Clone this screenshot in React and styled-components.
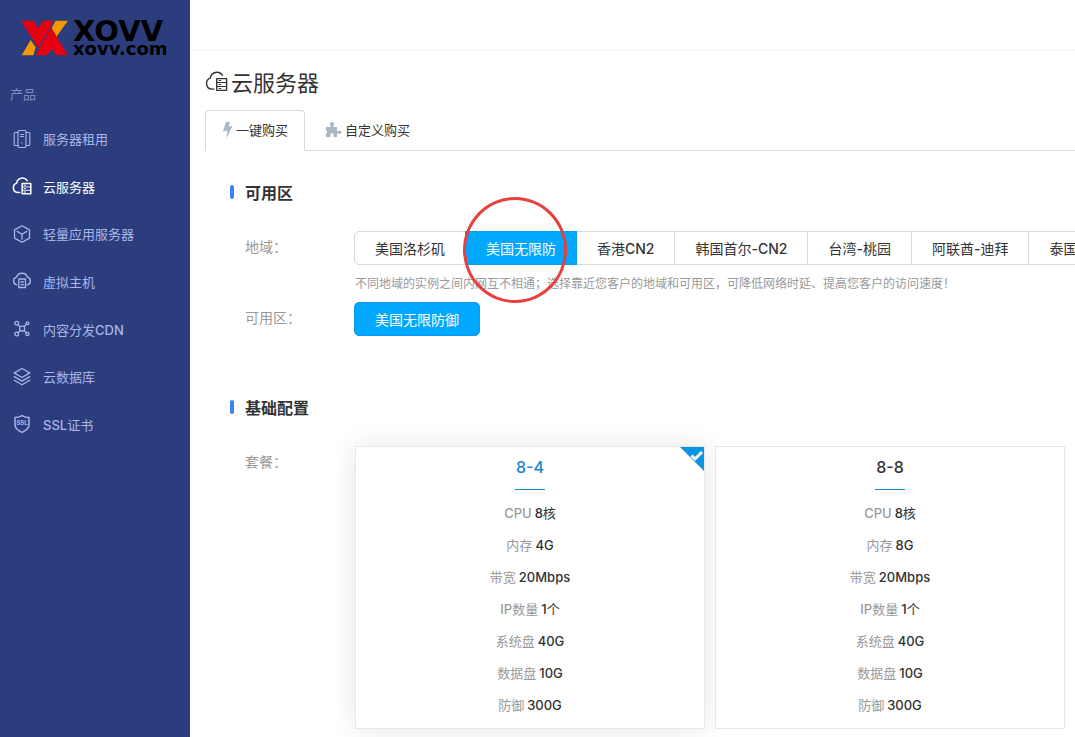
import React, { useState } from 'react';
import styled, { createGlobalStyle } from 'styled-components';

const GlobalStyle = createGlobalStyle`
  * {
    box-sizing: border-box;
  }

  body {
    margin: 0;
    background: #fff;
    color: #333;
    font-family: Inter, "Noto Sans CJK SC", sans-serif;
    font-size: 13px;
  }

  button {
    font-family: inherit;
    cursor: pointer;
  }
`;

const Page = styled.div`
  display: flex;
  height: 100vh;
  overflow: hidden;
`;

const Sidebar = styled.aside`
  flex: 0 0 190px;
  background: #2b3d7d;
`;

const Logo = styled.a`
  display: flex;
  align-items: center;
  gap: 5px;
  height: 76px;
  padding-left: 21px;
  color: #000;
  text-decoration: none;
  font-family: "DejaVu Sans", sans-serif;
  font-weight: bold;
`;

const LogoText = styled.span`
  display: flex;
  flex-direction: column;
`;

const LogoName = styled.span`
  font-size: 29px;
  line-height: 22px;
`;

const LogoDomain = styled.span`
  font-size: 18px;
  line-height: 14px;
`;

const MenuTitle = styled.div`
  margin-bottom: 3px;
  padding-left: 10px;
  line-height: 36px;
  color: #7d8cc4;
`;

const Menu = styled.nav`
  display: grid;
  grid-auto-rows: 1fr;
  min-height: 333px;
`;

const MenuLink = styled.a`
  display: flex;
  align-items: center;
  gap: 11px;
  padding-left: 12px;
  color: ${(props) => (props.$active ? '#fff' : '#a9b7e8')};
  text-decoration: none;

  &:hover {
    color: #fff;
  }
`;

const Main = styled.main`
  flex: 1;
  min-width: 0;
  overflow: hidden;
`;

const TopBar = styled.header`
  height: 50px;
  border-bottom: 1px solid #f3f3f3;
  box-shadow: 0 1px 2px rgba(0, 0, 0, 0.03);
`;

const PageTitle = styled.h1`
  display: flex;
  align-items: center;
  gap: 3px;
  height: 60px;
  margin: 0;
  padding: 2px 0 0 15px;
  font-size: 22px;
  font-weight: 400;
`;

const Tabs = styled.div`
  display: flex;
  gap: 3px;
  height: 41px;
  margin-left: 15px;
  border-bottom: 1px solid #d9d9d9;
`;

const Tab = styled.button`
  display: flex;
  align-items: center;
  gap: 3px;
  height: 41px;
  padding: 0 16px 2px;
  border: 1px solid ${(props) => (props.$active ? '#d9d9d9' : 'transparent')};
  border-bottom-color: ${(props) => (props.$active ? '#fff' : '#d9d9d9')};
  border-radius: 4px 4px 0 0;
  background: #fff;
  color: #333;
  font-size: 13px;

  svg {
    color: #a9b7c4;
  }
`;

const Section = styled.section`
  padding: 23px 10px 30px 40px;
`;

const SectionTitle = styled.h2`
  display: flex;
  align-items: center;
  gap: 11px;
  margin: 0;
  height: 36px;
  font-size: 16px;
  font-weight: 600;

  &::before {
    content: "";
    width: 4px;
    height: 14px;
    border-radius: 2px;
    background: #3b82f6;
  }
`;

const Field = styled.div`
  display: flex;
  padding-left: 15px;
  margin-top: ${(props) => props.$top}px;
`;

const Label = styled.div`
  flex: 0 0 109px;
  line-height: 32px;
  color: #999;
  font-size: 14px;
`;

const Control = styled.div`
  flex: 1;
  min-width: 0;
`;

const Options = styled.div`
  display: flex;
`;

const Option = styled.button`
  position: relative;
  flex: none;
  height: 34px;
  margin-left: -1px;
  padding: 0 20px;
  border: 1px solid ${(props) => (props.$active ? '#0c9bea' : '#d9d9d9')};
  background: ${(props) => (props.$active ? '#00a8ff' : '#fff')};
  color: ${(props) => (props.$active ? '#fff' : '#333')};
  z-index: ${(props) => (props.$active ? 1 : 0)};
  font-size: 14px;

  &:first-child {
    margin-left: 0;
    border-radius: 5px 0 0 5px;
  }

  &:last-child {
    border-radius: 0 5px 5px 0;
  }

  &:only-child {
    border-radius: 5px;
  }
`;

const Marker = styled.span`
  position: absolute;
  top: -35px;
  left: -3px;
  width: 104px;
  height: 106px;
  border: 3px solid #e8403c;
  border-radius: 50%;
  pointer-events: none;
`;

const Hint = styled.p`
  margin: 0;
  padding-left: 1px;
  line-height: 37px;
  color: #999;
  font-size: 12px;
  white-space: nowrap;
`;

const Plans = styled.div`
  display: grid;
  grid-template-columns: repeat(auto-fill, minmax(340px, 1fr));
  gap: 10px;
  padding-left: 1px;
`;

const Plan = styled.button`
  position: relative;
  display: flex;
  flex-direction: column;
  align-items: center;
  padding: 0 0 7px;
  border: 1px solid #e8e8e8;
  background: #fff;
  color: #333;
  font-size: 13px;
  box-shadow: ${(props) => (props.$active ? '0 0 25px rgba(0, 0, 0, 0.1)' : 'none')};
`;

const PlanName = styled.span`
  width: 30px;
  height: 43px;
  margin-bottom: 7px;
  border-bottom: 1px solid #1090c8;
  color: ${(props) => (props.$active ? '#1c87ca' : '#333')};
  font-size: 16px;
  font-weight: 500;
  line-height: 41px;
  white-space: nowrap;
`;

const Spec = styled.span`
  display: flex;
  gap: 3px;
  line-height: 32px;
  color: #999;
`;

const SpecValue = styled.span`
  color: #333;
`;

const Corner = styled.svg`
  position: absolute;
  top: 0;
  right: 0;
`;

const Latin = styled.span`
  font-weight: 500;
`;

// latin letters and digits are set heavier than the chinese text around them
const Mixed = ({ children }) => (
  <span>
    {children.split(/([\w-]+)/).map((part, i) => (i % 2 ? <Latin key={i}>{part}</Latin> : part))}
  </span>
);

const Icon = ({ size = 20, width = 1.3, children }) => (
  <svg
    width={size}
    height={size}
    viewBox="0 0 20 20"
    fill="none"
    stroke="currentColor"
    strokeWidth={width}
    strokeLinecap="round"
    strokeLinejoin="round"
    aria-hidden="true"
  >
    {children}
  </svg>
);

const CloudServer = (props) => (
  <Icon {...props}>
    <path d="M7.8 16.6H6A4.9 4.9 0 0 1 4.6 7.1 5.8 5.8 0 0 1 15.2 4.6" />
    <path d="M10.2 7.5h8.6v10.2h-8.6z" />
    <path strokeWidth="0.9" d="M10.2 10.9h8.6M10.2 14.3h8.6M12.3 9.2h1.4M12.3 12.6h1.4M12.3 16h1.4" />
  </Icon>
);

const icons = {
  server: (
    <Icon width={1.1}>
      <rect x="6" y="1.5" width="8" height="17" rx="1.2" />
      <path d="M6 3.5H3.2a1 1 0 0 0-1 1v11a1 1 0 0 0 1 1H6M14 3.5h2.8a1 1 0 0 1 1 1v11a1 1 0 0 1-1 1H14M8.5 5.5h3M8.5 7.5h3M10 13.5v.5" />
    </Icon>
  ),
  cloud: <CloudServer width={1.5} />,
  cube: (
    <Icon>
      <path d="M10 1.8l7.5 4.1v8.2L10 18.3l-7.5-4.2V5.9zM5.2 7.4L10 10.2l4.8-2.8M10 10.2v5" />
    </Icon>
  ),
  host: (
    <Icon>
      <path d="M4.8 13.8A3.9 3.9 0 0 1 4.5 6.2 5.8 5.8 0 0 1 15.5 6.2a3.9 3.9 0 0 1-.3 7.6" />
      <path d="M6.8 8h6.7v8.5H6.8zM9 11h2.4M9 13.7h2.4" />
    </Icon>
  ),
  cdn: (
    <Icon>
      <circle cx="4.7" cy="4.2" r="1.9" />
      <circle cx="15.5" cy="4.2" r="1.4" />
      <circle cx="4.7" cy="15" r="1.9" />
      <circle cx="15.5" cy="15" r="1.6" />
      <rect x="7.7" y="7.2" width="4.8" height="4.8" rx="1.2" />
      <path d="M6 5.6l2 2M14.4 5.2l-2.2 2.3M6 13.6l2-2M14.3 13.8l-2.1-2.2" />
    </Icon>
  ),
  database: (
    <Icon>
      <path d="M10 1.5l7.8 4.4L10 10.5 2.2 5.9zM2.2 9.6l7.8 4.5 7.8-4.5M2.2 13.3L10 17.8l7.8-4.5" />
    </Icon>
  ),
  ssl: (
    <Icon width={1.5}>
      <path d="M10 1.6c2.2 1.3 4.6 2 7 2v7.2c0 3.6-3.3 6-7 7.6-3.7-1.6-7-4-7-7.6V3.6c2.4 0 4.8-.7 7-2z" />
      <text x="10" y="11" textAnchor="middle" fontSize="6" fontWeight="700" fill="currentColor" stroke="none">SSL</text>
    </Icon>
  ),
};

const menu = [
  { icon: 'server', name: '服务器租用' },
  { icon: 'cloud', name: '云服务器' },
  { icon: 'cube', name: '轻量应用服务器' },
  { icon: 'host', name: '虚拟主机' },
  { icon: 'cdn', name: '内容分发CDN' },
  { icon: 'database', name: '云数据库' },
  { icon: 'ssl', name: 'SSL证书' },
];

const regions = ['美国洛杉矶', '美国无限防', '香港CN2', '韩国首尔-CN2', '台湾-桃园', '阿联酋-迪拜', '泰国-曼谷'];

const plans = [
  { name: '8-4', memory: '4G' },
  { name: '8-8', memory: '8G' },
];

const specs = (plan) => [
  ['CPU', '8核'],
  ['内存', plan.memory],
  ['带宽', '20Mbps'],
  ['IP数量', '1个'],
  ['系统盘', '40G'],
  ['数据盘', '10G'],
  ['防御', '300G'],
];

const App = () => {
  const [tab, setTab] = useState('quick');
  const [region, setRegion] = useState('美国无限防');
  const [plan, setPlan] = useState('8-4');

  return (
    <Page>
      <GlobalStyle />
      <Sidebar>
        <Logo href="#">
          <svg width="47" height="36" viewBox="0 0 141 108" aria-hidden="true">
            <path fill="#f39800" d="M104 2h37l-35 48-14-26zM2 106l27-46 15 22-7 24z" />
            <path fill="#e60012" d="M0 2h37l15 23L66 2h32L52 84z" />
            <path fill="#e60012" d="M90 22l50 84h-34L92 86l-14 20H44z" />
          </svg>
          <LogoText>
            <LogoName>XOVV</LogoName>
            <LogoDomain>xovv.com</LogoDomain>
          </LogoText>
        </Logo>
        <MenuTitle>产品</MenuTitle>
        <Menu>
          {menu.map((item) => (
            <MenuLink href="#" key={item.name} $active={item.icon === 'cloud'}>
              {icons[item.icon]}
              <Mixed>{item.name}</Mixed>
            </MenuLink>
          ))}
        </Menu>
      </Sidebar>
      <Main>
        <TopBar />
        <PageTitle>
          <CloudServer size={23} width={1.2} />
          云服务器
        </PageTitle>
        <Tabs>
          <Tab $active={tab === 'quick'} onClick={() => setTab('quick')}>
            <svg width="11" height="18" viewBox="0 0 11 18" fill="currentColor" aria-hidden="true">
              <path d="M4 1h4L6.5 5.5 10.5 5 4.5 17l1-7.5L1 10.5z" />
            </svg>
            一键购买
          </Tab>
          <Tab $active={tab === 'custom'} onClick={() => setTab('custom')}>
            <svg width="17" height="16" viewBox="0 0 17 16" fill="currentColor" aria-hidden="true">
              <path d="M1 5h4.500V3.500a2 2 0 1 1 3 0V5H12v4h1.500a1.700 1.700 0 1 1 0 2.500H12V15H8.500v-2.500a1.500 1.500 0 0 0-3 0V15H1v-4h1V8.500H1z" />
            </svg>
            自定义购买
          </Tab>
        </Tabs>
        <Section>
          <SectionTitle>可用区</SectionTitle>
          <Field $top={21}>
            <Label>地域：</Label>
            <Control>
              <Options>
                {regions.map((name) => (
                  <Option key={name} $active={region === name} onClick={() => setRegion(name)}>
                    <Mixed>{name}</Mixed>
                    {name === '美国无限防' && <Marker />}
                  </Option>
                ))}
              </Options>
              <Hint>不同地域的实例之间内网互不相通；选择靠近您客户的地域和可用区，可降低网络时延、提高您客户的访问速度！</Hint>
            </Control>
          </Field>
          <Field $top={0}>
            <Label>可用区：</Label>
            <Options>
              <Option $active>美国无限防御</Option>
            </Options>
          </Field>
        </Section>
        <Section>
          <SectionTitle>基础配置</SectionTitle>
          <Field $top={21}>
            <Label>套餐：</Label>
            <Control>
              <Plans>
                {plans.map((item) => (
                  <Plan key={item.name} $active={plan === item.name} onClick={() => setPlan(item.name)}>
                    <PlanName $active={plan === item.name}>{item.name}</PlanName>
                    {specs(item).map(([label, value]) => (
                      <Spec key={label}>
                        <Mixed>{label}</Mixed>
                        <SpecValue>
                          <Mixed>{value}</Mixed>
                        </SpecValue>
                      </Spec>
                    ))}
                    {plan === item.name && (
                      <Corner width="24" height="24" viewBox="0 0 24 24" aria-hidden="true">
                        <path fill="#0d94e0" d="M0 0h24v24z" />
                        <path fill="none" stroke="#fff" strokeWidth="3" d="M11.5 8.5l3.5 3.5 7-7" />
                      </Corner>
                    )}
                  </Plan>
                ))}
              </Plans>
            </Control>
          </Field>
        </Section>
      </Main>
    </Page>
  );
};

export default App;
